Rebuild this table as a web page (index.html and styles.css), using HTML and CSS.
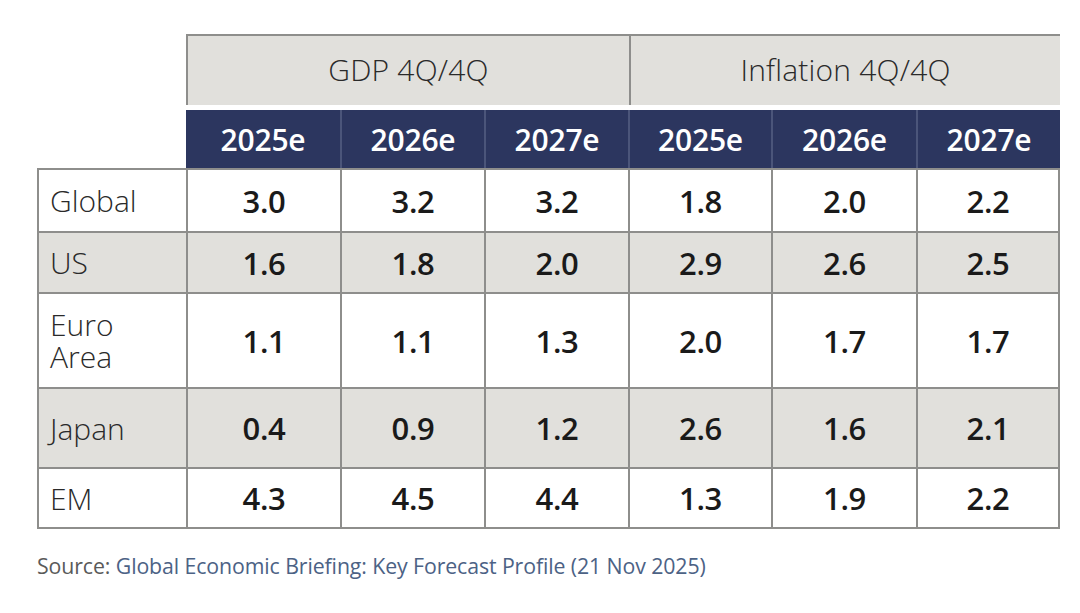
FILE: index.html
```html
<!DOCTYPE html>
<html lang="en">
<head>
<meta charset="utf-8">
<title>Forecast table</title>
<link rel="stylesheet" href="styles.css">
</head>
<body>
<div class="page">
  <div class="group-head">
    <div class="group-cell">GDP 4Q/4Q</div>
    <div class="group-cell">Inflation 4Q/4Q</div>
  </div>
  <div class="years">
    <div class="year">2025e</div>
    <div class="year">2026e</div>
    <div class="year">2027e</div>
    <div class="year">2025e</div>
    <div class="year">2026e</div>
    <div class="year">2027e</div>
  </div>
  <div class="grid">
    <div class="lab">Global</div>
    <div class="num">3.0</div><div class="num">3.2</div><div class="num">3.2</div>
    <div class="num">1.8</div><div class="num">2.0</div><div class="num">2.2</div>

    <div class="lab alt">US</div>
    <div class="num alt">1.6</div><div class="num alt">1.8</div><div class="num alt">2.0</div>
    <div class="num alt">2.9</div><div class="num alt">2.6</div><div class="num alt">2.5</div>

    <div class="lab two"><span class="ln">Euro</span><span class="ln">Area</span></div>
    <div class="num">1.1</div><div class="num">1.1</div><div class="num">1.3</div>
    <div class="num">2.0</div><div class="num">1.7</div><div class="num">1.7</div>

    <div class="lab alt">Japan</div>
    <div class="num alt">0.4</div><div class="num alt">0.9</div><div class="num alt">1.2</div>
    <div class="num alt">2.6</div><div class="num alt">1.6</div><div class="num alt">2.1</div>

    <div class="lab">EM</div>
    <div class="num">4.3</div><div class="num">4.5</div><div class="num">4.4</div>
    <div class="num">1.3</div><div class="num">1.9</div><div class="num">2.2</div>
  </div>
  <p class="source">Source: <span class="src-link">Global Economic Briefing: Key Forecast Profile (21 Nov 2025)</span></p>
</div>
</body>
</html>
```
FILE: styles.css
```css
* { box-sizing: border-box; }
html, body { margin: 0; padding: 0; background: #ffffff; }
body {
  font-family: "Open Sans", "Noto Sans", "Liberation Sans", sans-serif;
  color: #1c1c1c;
  width: 1080px;
  height: 613px;
  overflow: hidden;
}
.page {
  padding: 34px 0 0 37px;
}
.group-head {
  margin-left: 149px;
  width: 874px;
  height: 71px;
  display: grid;
  grid-template-columns: 441px 429px;
  column-gap: 2px;
  background: #8e8e8c;
  padding: 2px 2px 0 2px;
}
.group-cell {
  background: #e1e0dc;
  display: flex;
  align-items: center;
  justify-content: center;
  font-size: 30px;
  font-weight: 300;
  color: #2a2a2a;
  letter-spacing: 0.2px;
  padding-bottom: 2px;
}
.years {
  margin-top: 5px;
  margin-left: 149px;
  width: 874px;
  height: 58px;
  display: grid;
  grid-template-columns: 154px 142px 142px 141px 143px 142px;
  column-gap: 2px;
  background: #4b557a;
  padding: 0 2px 0 0;
}
.year {
  background: #2c365f;
  color: #ffffff;
  font-size: 30px;
  font-weight: 600;
  letter-spacing: -0.2px;
  display: flex;
  align-items: center;
  justify-content: center;
}
.grid {
  width: 1023px;
  display: grid;
  grid-template-columns: 147px 152px 142px 142px 141px 143px 140px;
  grid-template-rows: 61px 59px 93px 78px 58px;
  gap: 2px;
  padding: 2px;
  background: #8e8e8c;
}
.lab, .num {
  background: #ffffff;
  display: flex;
  align-items: center;
}
.alt { background: #e1e0dc; }
.lab {
  padding-left: 11px;
  font-size: 30px;
  font-weight: 300;
  color: #2a2a2a;
  letter-spacing: 0;
}
.lab.two {
  flex-direction: column;
  align-items: flex-start;
  justify-content: center;
  gap: 2px;
}
.ln {
  display: block;
  line-height: 30px;
}
.num {
  justify-content: center;
  font-size: 31px;
  font-weight: 600;
  letter-spacing: -0.3px;
  color: #1a1a1a;
}
.source {
  margin: 22px 0 0 0;
  font-size: 21.3px;
  font-weight: 400;
  color: #5a5a5a;
  letter-spacing: -0.1px;
}
.src-link { color: #4c6285; }
```
